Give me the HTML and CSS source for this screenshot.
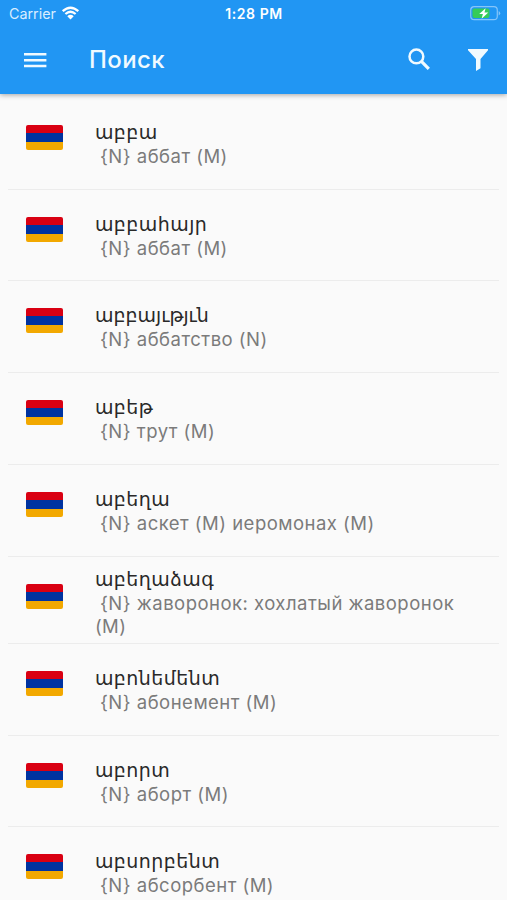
FILE: index.html
```html
<!DOCTYPE html>
<html lang="ru">
<head>
<meta charset="utf-8">
<title>Поиск</title>
<link rel="stylesheet" href="styles.css">
</head>
<body>
<header class="app-header">
  <div class="status-bar">
    <div class="carrier"><span>Carrier</span>
      <svg class="wifi" viewBox="0 0 18 14"><path d="M1.2 5.2Q9-1.8 16.8 5.2M3.9 8Q9 3.6 14.1 8" fill="none" stroke="currentColor" stroke-width="2.3"/><path d="M5.8 10.2Q9 7.4 12.2 10.2L9 13.6Z" fill="currentColor"/></svg>
    </div>
    <div class="clock">1:28 PM</div>
    <svg class="battery" viewBox="0 0 31 15"><rect x=".7" y=".7" width="26.6" height="13" rx="3.5" fill="none" stroke="#84c5fa" stroke-width="1.2"/><rect x="2.5" y="2.5" width="17" height="9.4" rx="1.8" fill="#35cc5a"/><path d="M28.7 5v4.5q1.5-.7 1.5-2.2T28.7 5" fill="#84c5fa"/><path d="M15.6 2.2 9.2 8h3.7l-1.3 4.7L18.3 6.5h-3.8Z" fill="#fff"/></svg>
  </div>
  <div class="toolbar">
    <svg class="menu" viewBox="0 0 24 18"><path d="M1 3.2h22.4M1 9.2h22.4M1 15.1h22.4" stroke="currentColor" stroke-width="2.5"/></svg>
    <h1>Поиск</h1>
    <svg class="search" viewBox="0 0 24 24"><circle cx="9.4" cy="9.4" r="6.9" fill="none" stroke="currentColor" stroke-width="2.5"/><path d="m14.4 14.4 7.4 7.4" stroke="currentColor" stroke-width="3.2"/></svg>
    <svg class="filter" viewBox="0 0 20 22"><path d="M0 0h20v1.2L12.5 10v9.2L8 22V10L0 1.2Z" fill="currentColor"/></svg>
  </div>
</header>
<main class="words">
  <article class="word"><i class="flag"></i><div class="text"><h2>աբբա</h2><p>&nbsp;{N} аббат (M)</p></div></article>
  <article class="word"><i class="flag"></i><div class="text"><h2>աբբահայր</h2><p>&nbsp;{N} аббат (M)</p></div></article>
  <article class="word"><i class="flag"></i><div class="text"><h2 class="tight">աբբայւթյւն</h2><p>&nbsp;{N} аббатство (N)</p></div></article>
  <article class="word"><i class="flag"></i><div class="text"><h2>աբեթ</h2><p>&nbsp;{N} трут (M)</p></div></article>
  <article class="word"><i class="flag"></i><div class="text"><h2>աբեղա</h2><p>&nbsp;{N} аскет (M) иеромонах (M)</p></div></article>
  <article class="word three-line"><i class="flag"></i><div class="text"><h2>աբեղաձագ</h2><p>&nbsp;{N} жаворонок: хохлатый жаворонок<br>(M)</p></div></article>
  <article class="word"><i class="flag"></i><div class="text"><h2>աբոնեմենտ</h2><p>&nbsp;{N} абонемент (M)</p></div></article>
  <article class="word"><i class="flag"></i><div class="text"><h2>աբորտ</h2><p>&nbsp;{N} аборт (M)</p></div></article>
  <article class="word"><i class="flag"></i><div class="text"><h2>աբսորբենտ</h2><p>&nbsp;{N} абсорбент (M)</p></div></article>
</main>
</body>
</html>
```
FILE: styles.css
```css
* { box-sizing: border-box; }
body {
  margin: 0;
  height: 900px;
  overflow: hidden;
  display: flex;
  flex-direction: column;
  background: #fafafa;
  font-family: Inter, "DejaVu Sans", sans-serif;
}
h1, h2, p { margin: 0; font-weight: 400; white-space: nowrap; }
svg { display: block; flex: none; }
.app-header {
  flex: none;
  height: 94px;
  background: #2196f3;
  color: #fff;
  box-shadow: 0 1px 5px rgba(0, 0, 0, .35);
}
.status-bar {
  height: 27px;
  padding: 0 6px 0 9px;
  display: grid;
  grid-template-columns: 1fr auto 1fr;
  align-items: center;
}
.carrier { display: flex; align-items: center; gap: 5px; font-size: 14.3px; color: #d9edff; }
.wifi { width: 19px; height: 14px; color: #fff; margin-top: -2px; }
.clock { font-size: 14px; font-weight: 600; letter-spacing: .6px; margin-right: 2px; }
.battery { width: 31px; height: 15px; justify-self: end; }
.toolbar {
  height: 66px;
  padding: 0 19px 0 23px;
  display: flex;
  align-items: center;
  color: #f0faff;
}
.menu { width: 24px; height: 18px; }
h1 { margin: -1px 0 0 42px; font-size: 24px; font-weight: 500; letter-spacing: .4px; flex: 1; }
.search { width: 24px; height: 24px; margin: -2px 37px 0 0; }
.filter { width: 20px; height: 22px; margin-top: -1px; }
.words { padding: 4.1px 8px 0; flex: none; }
.word {
  height: 91.7px;
  padding: 22px 0 0 18.4px;
  display: flex;
  gap: 31.5px;
  border-bottom: 1px solid #ececec;
}
.flag {
  flex: none;
  width: 37px;
  height: 25px;
  margin-top: 5px;
  border-radius: 2px;
  background: linear-gradient(#d90012 0 33.3%, #0033a0 33.3% 67%, #f2a800 67%);
}
.text { color: #7b7b7b; }
h2 {
  font-family: "DejaVu Sans", sans-serif;
  font-size: 19px;
  line-height: 25px;
  letter-spacing: .45px;
  color: #292929;
}
.tight { letter-spacing: 0; }
p { text-indent: -.6px; font-size: 18.5px; line-height: 23px; letter-spacing: .48px; }
.three-line { height: 87.3px; padding-top: 10px; }
.three-line .flag { margin-top: 17px; }
```
